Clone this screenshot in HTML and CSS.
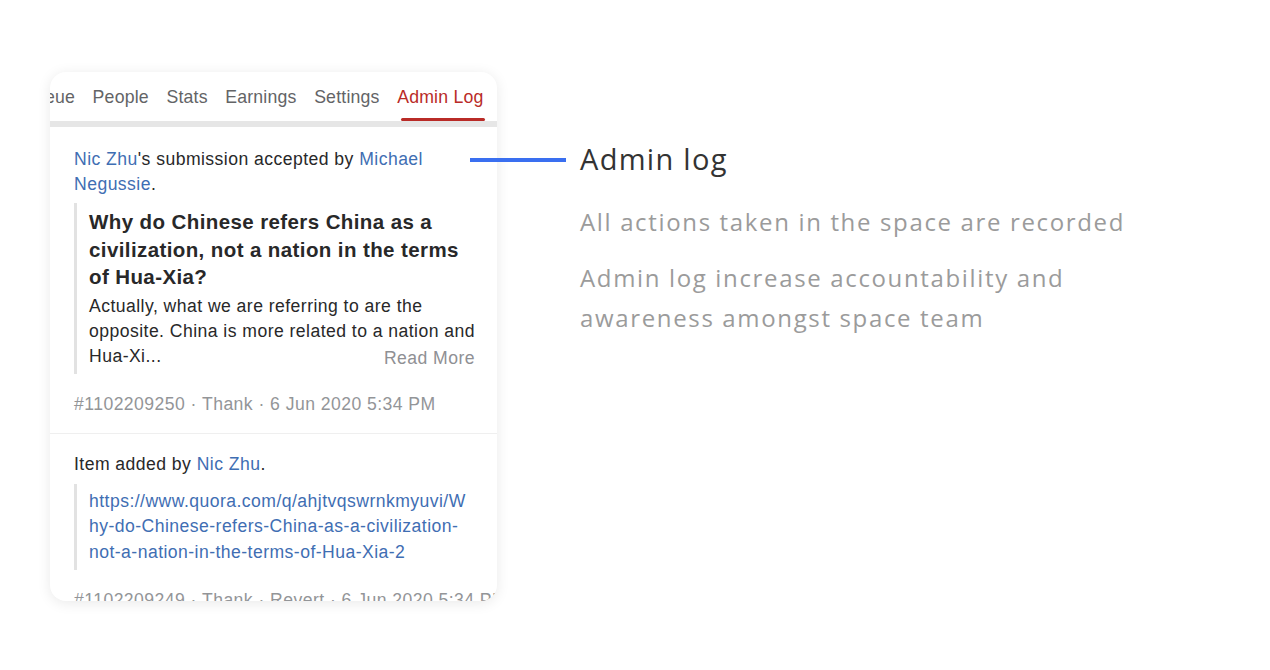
FILE: index.html
```html
<!DOCTYPE html>
<html lang="en">
<head>
<meta charset="utf-8">
<title>Admin log</title>
<link rel="stylesheet" href="styles.css">
</head>
<body>
<div class="page">
  <div class="card">
    <nav class="tabs">
      <div class="tab-list">
        <span class="tab">Queue</span>
        <span class="tab">People</span>
        <span class="tab">Stats</span>
        <span class="tab">Earnings</span>
        <span class="tab">Settings</span>
        <span class="tab active">Admin Log</span>
      </div>
    </nav>
    <div class="band"></div>
    <div class="entry">
      <p class="action"><a class="link">Nic Zhu</a>'s submission accepted by <a class="link">Michael Negussie</a>.</p>
      <blockquote class="quote">
        <h3 class="q-title">Why do Chinese refers China as a civilization, not a nation in the terms of Hua-Xia?</h3>
        <p class="q-body">Actually, what we are referring to are the opposite. China is more related to a nation and Hua-Xi... <span class="more">Read More</span></p>
      </blockquote>
      <p class="meta">#1102209250 · Thank · 6 Jun 2020 5:34 PM</p>
    </div>
    <div class="entry entry-second">
      <p class="action">Item added by <a class="link">Nic Zhu</a>.</p>
      <blockquote class="quote">
        <p class="url link">https://www.quora.com/q/ahjtvqswrnkmyuvi/Why-do-Chinese-refers-China-as-a-civilization-not-a-nation-in-the-terms-of-Hua-Xia-2</p>
      </blockquote>
      <p class="meta">#1102209249 · Thank · Revert · 6 Jun 2020 5:34 PM</p>
    </div>
  </div>
  <div class="connector"></div>
  <div class="info">
    <h2 class="info-title">Admin log</h2>
    <p class="info-text">All actions taken in the space are recorded</p>
    <p class="info-text second">Admin log increase accountability and awareness amongst space team</p>
  </div>
</div>
</body>
</html>
```

FILE: styles.css
```css
* { box-sizing: border-box; }
html, body {
  margin: 0;
  padding: 0;
  background: #ffffff;
}
.page {
  position: relative;
  display: flex;
  align-items: flex-start;
  padding: 72px 0 0 50px;
  height: 670px;
  width: 1270px;
}
.card {
  width: 447px;
  height: 529px;
  background: #fff;
  border-radius: 16px;
  box-shadow: 0 2px 14px rgba(0, 0, 0, 0.09);
  overflow: hidden;
  flex-shrink: 0;
  font-family: "Liberation Sans", Arial, sans-serif;
}
.tabs {
  height: 49px;
  overflow: hidden;
}
.tab-list {
  display: flex;
  gap: 17.5px;
  margin-left: -29px;
  height: 49px;
  white-space: nowrap;
}
.tab {
  position: relative;
  font-size: 17.7px;
  letter-spacing: 0.2px;
  line-height: 50px;
  color: #636466;
}
.tab.active {
  color: #b92b27;
}
.tab.active::after {
  content: "";
  position: absolute;
  left: 4px;
  right: -1px;
  bottom: 0;
  height: 3px;
  border-radius: 2px;
  background: #b92b27;
}
.band {
  height: 6px;
  background: #e6e6e6;
}
.entry {
  padding: 20px 22px 16px 24px;
  border-bottom: 1px solid #efefef;
  color: #282829;
  font-size: 17.6px;
  letter-spacing: 0.45px;
}
.entry-second {
  padding-top: 18px;
}
.action {
  margin: 0;
  line-height: 25px;
}
.link {
  color: #3f6eb3;
  text-decoration: none;
}
.quote {
  margin: 6px 0 0 0;
  padding: 5px 0 5px 12px;
  border-left: 3px solid #e2e2e2;
}
.entry-second .quote {
  margin-top: 7px;
}
.q-title {
  margin: 0;
  font-size: 20.5px;
  line-height: 27.5px;
  letter-spacing: 0.4px;
  font-weight: bold;
  color: #282829;
}
.q-body {
  margin: 3px 0 0 0;
  line-height: 25px;
  text-align-last: justify;
}
.more {
  display: inline-block;
  white-space: nowrap;
  color: #8f9094;
  position: relative;
  top: 2px;
}
.url {
  margin: 0;
  line-height: 25.5px;
  overflow-wrap: anywhere;
}
.meta {
  margin: 18px 0 0 0;
  line-height: 25px;
  color: #939598;
  white-space: nowrap;
}
.connector {
  position: absolute;
  left: 470px;
  top: 158px;
  width: 96px;
  height: 4px;
  background: #3a6ff0;
}
.info {
  margin-left: 83px;
  font-family: "Open Sans", "DejaVu Sans", sans-serif;
}
.info-title {
  margin: 67px 0 0 0;
  font-size: 29px;
  line-height: 40px;
  font-weight: normal;
  letter-spacing: 1.3px;
  color: #333333;
}
.info-text {
  margin: 23px 0 0 0;
  width: 570px;
  font-size: 24px;
  line-height: 40px;
  color: #9b9b9b;
  letter-spacing: 1.65px;
}
.info-text.second {
  margin-top: 16px;
}
```
